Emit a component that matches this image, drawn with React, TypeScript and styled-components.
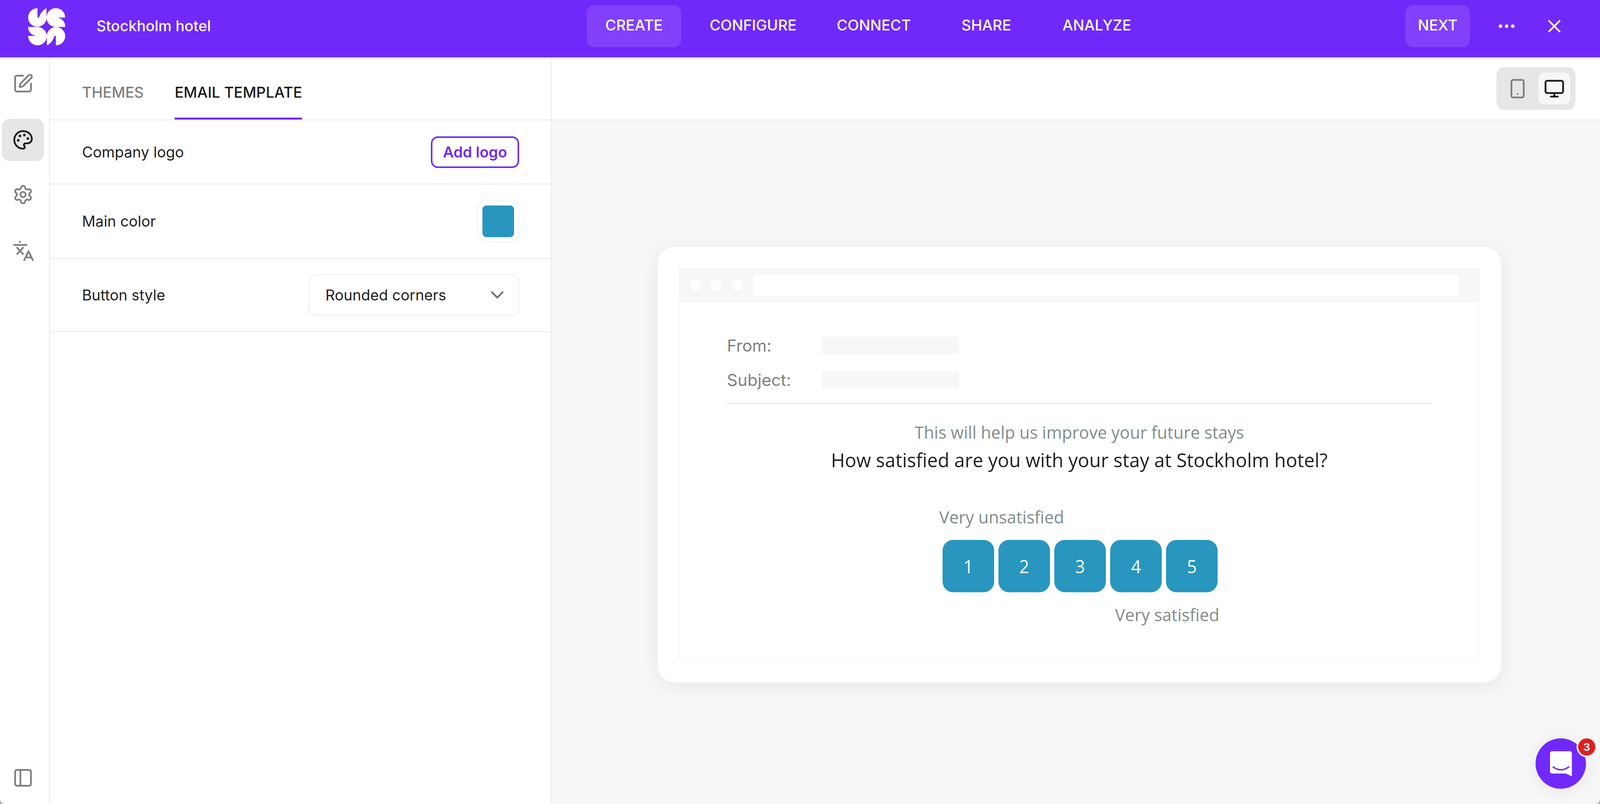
import React from 'react';
import styled, { createGlobalStyle } from 'styled-components';
import { ChevronDown, Ellipsis, Monitor, Palette, PanelLeft, Settings, Smartphone, SquarePen, X } from 'lucide-react';

const GlobalStyle = createGlobalStyle`
  html, body {
    margin: 0;
    padding: 0;
    background: #b8b8b8;
  }
  * {
    box-sizing: border-box;
  }
`;

const purple = '#7029f8';
const teal = '#2896be';
const line = '#e8e8e8';
const ui = "Inter, 'Liberation Sans', sans-serif";
const mail = "'Open Sans', 'Liberation Sans', sans-serif";

// fills the window: panels on the left are fixed, the preview takes what is left
const Page = styled.div`
  position: relative;
  width: 100%;
  height: 100vh;
  overflow: hidden;
  display: flex;
  flex-direction: column;
  font-family: ${ui};
  background: #fff;
  border-radius: 0 0 14px 14px;
`;

const Header = styled.header`
  flex: 0 0 147px;
  display: flex;
  align-items: flex-start;
  background: ${purple};
  color: #fff;
`;

const Brand = styled.div`
  flex: 0 0 1502px;
  height: 147px;
  display: flex;
  align-items: center;
  padding-left: 72px;
`;

const Logo = styled.svg`
  width: 95px;
  height: 95px;
  margin-top: -11px;
  margin-right: 80px;
`;

const ProjectName = styled.div`
  font-size: 38px;
  font-weight: 500;
  margin-top: -16px;
`;

const Nav = styled.nav`
  display: flex;
  margin-top: 13px;
`;

const NavItem = styled.div<{ $w: number; $active?: boolean }>`
  width: ${p => p.$w}px;
  height: 108px;
  border-radius: 20px;
  display: flex;
  align-items: center;
  justify-content: center;
  padding-bottom: 6px;
  font-size: 38px;
  font-weight: 500;
  background: ${p => (p.$active ? '#8240fb' : 'transparent')};
`;

const HeaderRight = styled.div`
  margin-left: auto;
  margin-top: 13px;
  display: flex;
  align-items: center;
  height: 108px;
`;

const NextButton = styled.div`
  width: 165px;
  height: 108px;
  border-radius: 20px;
  background: #8240fb;
  display: flex;
  align-items: center;
  justify-content: center;
  padding-bottom: 6px;
  font-size: 38px;
  font-weight: 500;
  margin-right: 67px;
`;

const HeaderIcon = styled.span<{ $gap: number }>`
  display: flex;
  margin-right: ${p => p.$gap}px;
`;

const Body = styled.div`
  flex: 1;
  display: flex;
  min-height: 0;
`;

const Rail = styled.aside`
  flex: 0 0 128px;
  display: flex;
  flex-direction: column;
  align-items: flex-start;
  padding: 13px 0 13px 5px;
  border-right: 2px solid ${line};
`;

const RailButton = styled.div<{ $active?: boolean; $mb?: number }>`
  width: 108px;
  height: 108px;
  flex: 0 0 108px;
  border-radius: 20px;
  margin-bottom: ${p => p.$mb ?? 0}px;
  display: flex;
  align-items: center;
  justify-content: center;
  color: ${p => (p.$active ? '#1a1a1a' : '#808080')};
  background: ${p => (p.$active ? '#e6e6e6' : 'transparent')};
`;

const RailSpacer = styled.div`
  flex: 1;
`;

const Panel = styled.section`
  flex: 0 0 1284px;
  display: flex;
  flex-direction: column;
  border-right: 2px solid ${line};
`;

const Tabs = styled.div`
  flex: 0 0 161px;
  display: flex;
  gap: 79px;
  padding-left: 82px;
  border-bottom: 2px solid ${line};
`;

const Tab = styled.div<{ $active?: boolean }>`
  display: flex;
  align-items: center;
  padding-top: 24px;
  height: 159px;
  font-size: 38px;
  font-weight: 500;
  color: ${p => (p.$active ? '#1a1a1a' : '#808080')};
  border-bottom: 5px solid ${p => (p.$active ? purple : 'transparent')};
`;

const Row = styled.div<{ $h: number }>`
  flex: 0 0 ${p => p.$h}px;
  display: flex;
  align-items: center;
  justify-content: space-between;
  padding: 0 81px 0 82px;
  border-bottom: 2px solid ${line};
  font-size: 38px;
  color: #1f1f1f;
`;

const AddLogo = styled.div`
  width: 226px;
  height: 81px;
  border: 4.5px solid ${purple};
  border-radius: 18px;
  color: ${purple};
  font-weight: 600;
  display: flex;
  align-items: center;
  justify-content: center;
`;

const Swatch = styled.div`
  width: 107px;
  height: 107px;
  border: 2px solid #f0f0f0;
  border-radius: 18px;
  display: flex;
  align-items: center;
  justify-content: center;
`;

const SwatchColor = styled.div`
  width: 81px;
  height: 81px;
  border-radius: 10px;
  background: ${teal};
`;

const Select = styled.div`
  width: 539px;
  height: 106px;
  border: 2px solid #ececec;
  border-radius: 20px;
  display: flex;
  align-items: center;
  justify-content: space-between;
  padding: 0 27px 0 41px;
`;

const Preview = styled.main`
  flex: 1;
  min-width: 0;
  display: flex;
  flex-direction: column;
  background: #f7f7f7;
`;

const PreviewBar = styled.div`
  flex: 0 0 161px;
  display: flex;
  align-items: flex-start;
  justify-content: flex-end;
  padding: 25px 63px 0 0;
  background: #fff;
  border-bottom: 2px solid ${line};
`;

const DeviceToggle = styled.div`
  width: 202px;
  height: 109px;
  border-radius: 20px;
  background: #e6e6e6;
  display: flex;
  align-items: center;
  padding-right: 13px;
`;

const DeviceOption = styled.div<{ $active?: boolean }>`
  width: ${p => (p.$active ? 82 : 107)}px;
  height: 81px;
  border-radius: 16px;
  display: flex;
  align-items: center;
  justify-content: center;
  color: ${p => (p.$active ? '#1a1a1a' : '#808080')};
  background: ${p => (p.$active ? '#f7f7f7' : 'transparent')};
`;

const Stage = styled.div`
  flex: 1;
  display: flex;
  justify-content: center;
  align-items: flex-start;
  padding: 324px 0 0 18px;
`;

const Card = styled.div`
  flex: 0 0 2160px;
  height: 1115px;
  background: #fff;
  border-radius: 44px;
  padding: 54px;
  box-shadow: 0 8px 50px rgba(0, 0, 0, 0.07);
`;

const Frame = styled.div`
  height: 1006px;
  border: 2px solid #f8f8f8;
  border-top: 0;
  font-family: ${mail};
`;

const BrowserBar = styled.div`
  height: 88px;
  background: #f7f7f7;
  display: flex;
  align-items: center;
  gap: 26px;
  padding: 0 54px 0 27px;
`;

const BrowserDot = styled.div`
  flex: 0 0 28px;
  height: 28px;
  border-radius: 50%;
  background: #fff;
`;

const AddressBar = styled.div`
  flex: 1;
  height: 53px;
  background: #fff;
`;

const MailBody = styled.div`
  padding: 88px 122px 0;
`;

const MetaRow = styled.div`
  display: flex;
  align-items: center;
  height: 45px;
  margin-bottom: 43px;
  font-family: ${ui};
  font-size: 42.5px;
  color: #808080;
`;

const MetaLabel = styled.div`
  width: 243px;
`;

const MetaValue = styled.div`
  width: 350px;
  height: 45px;
  background: #f7f7f7;
`;

const Divider = styled.div`
  height: 2px;
  margin-top: -6px;
  background: #e6e6e6;
`;

const Hint = styled.div`
  margin-top: 43px;
  text-align: center;
  font-size: 43px;
  line-height: 60px;
  color: #7f8c8d;
`;

const Question = styled.div`
  margin-top: 5px;
  text-align: center;
  font-size: 48.5px;
  line-height: 70px;
  color: #1f1f1f;
`;

const Scale = styled.div`
  width: 717px;
  margin: 82px auto 0;
`;

const ScaleLabel = styled.div<{ $right?: boolean }>`
  font-size: 43px;
  line-height: 60px;
  color: #7f8c8d;
  text-align: ${p => (p.$right ? 'right' : 'left')};
`;

const ScaleButtons = styled.div`
  display: flex;
  gap: 10.6px;
  margin: 28px 0 28px 8px;
`;

const ScaleButton = styled.div`
  width: 132.5px;
  height: 134px;
  border-radius: 27px;
  background: ${teal};
  color: #fff;
  font-size: 45px;
  display: flex;
  align-items: center;
  justify-content: center;
`;

const ChatBubble = styled.div`
  position: absolute;
  right: 36px;
  bottom: 39px;
  width: 129px;
  height: 129px;
  border-radius: 50%;
  background: ${purple};
  display: flex;
  align-items: center;
  justify-content: center;
  box-shadow: 0 4px 40px rgba(0, 0, 0, 0.08);
`;

const ChatBadge = styled.div`
  position: absolute;
  left: 105px;
  top: -4px;
  width: 52px;
  height: 52px;
  border-radius: 50%;
  border: 4px solid #f4f4f4;
  background: #e01e1e;
  color: #fff;
  font-size: 27px;
  font-weight: 700;
  display: flex;
  align-items: center;
  justify-content: center;
`;

const navItems = [
  { label: 'CREATE', w: 242, active: true },
  { label: 'CONFIGURE', w: 368 },
  { label: 'CONNECT', w: 250 },
  { label: 'SHARE', w: 326 },
  { label: 'ANALYZE', w: 240 },
];

const BrandMark = () => (
  <Logo viewBox="0 0 95 95" fill="#fff">
    <path d="M24 0V24L47 24A23.5 23.5 0 0 1 0 24A24 24 0 0 1 24 0Z" />
    <path d="M47 0V24A23 23 0 0 1 24 47C24 30 30 8 47 0Z" />
    <path d="M95 24H47A24 24 0 0 1 95 24Z" />
    <path d="M47 24H72C85 24 95 34 95 48H71A24 24 0 0 1 47 24Z" />
    <path d="M0 48H24A24 24 0 0 1 48 71H24C10 71 0 61 0 48Z" />
    <path d="M0 71H48A24 24 0 0 1 0 71Z" />
    <path d="M71 48A24 24 0 0 1 95 71A24 24 0 0 1 71 95V71H48A24 24 0 0 1 71 48Z" />
    <path d="M48 95V71A24 24 0 0 1 71 48C71 65 65 88 48 95Z" />
  </Logo>
);

// language icon: bar with dot, x, and a small A
const TranslateIcon = () => (
  <svg width="54" height="54" viewBox="0 0 54 54" fill="none" stroke="currentColor" strokeWidth="4.5" strokeLinecap="round" strokeLinejoin="round">
    <circle cx="19" cy="5" r="2.6" fill="currentColor" stroke="none" />
    <path d="M4 13H36" />
    <path d="M12 20L27 36M27 20L12 36" />
    <path d="M30 52L41 29L52 52M34 45H48" />
  </svg>
);

const ChatIcon = () => (
  <svg width="58" height="66" viewBox="0 0 58 66">
    <path d="M6 1H52A5 5 0 0 1 57 6V65L41 58H6A5 5 0 0 1 1 53V6A5 5 0 0 1 6 1Z" fill="#fff" />
    <path d="M9 41Q29 56 49 41" fill="none" stroke={purple} strokeWidth="3.5" strokeLinecap="round" />
  </svg>
);

export default function App() {
  return (
    <Page>
      <GlobalStyle />
      <Header>
        <Brand>
          <BrandMark />
          <ProjectName>Stockholm hotel</ProjectName>
        </Brand>
        <Nav>
          {navItems.map(item => (
            <NavItem key={item.label} $w={item.w} $active={item.active}>
              {item.label}
            </NavItem>
          ))}
        </Nav>
        <HeaderRight>
          <NextButton>NEXT</NextButton>
          <HeaderIcon $gap={68}>
            <Ellipsis size={54} strokeWidth={2} />
          </HeaderIcon>
          <HeaderIcon $gap={90}>
            <X size={54} strokeWidth={2} />
          </HeaderIcon>
        </HeaderRight>
      </Header>
      <Body>
        <Rail>
          <RailButton $mb={36}><SquarePen size={54} strokeWidth={2} /></RailButton>
          <RailButton $active $mb={32}><Palette size={54} strokeWidth={2} /></RailButton>
          <RailButton $mb={35}><Settings size={54} strokeWidth={2} /></RailButton>
          <RailButton><TranslateIcon /></RailButton>
          <RailSpacer />
          <RailButton><PanelLeft size={54} strokeWidth={2} /></RailButton>
        </Rail>
        <Panel>
          <Tabs>
            <Tab>THEMES</Tab>
            <Tab $active>EMAIL TEMPLATE</Tab>
          </Tabs>
          <Row $h={164}>
            Company logo
            <AddLogo>Add logo</AddLogo>
          </Row>
          <Row $h={190}>
            Main color
            <Swatch><SwatchColor /></Swatch>
          </Row>
          <Row $h={188}>
            Button style
            <Select>
              Rounded corners
              <ChevronDown size={54} strokeWidth={2} color="#6e6e6e" />
            </Select>
          </Row>
        </Panel>
        <Preview>
          <PreviewBar>
            <DeviceToggle>
              <DeviceOption><Smartphone size={54} strokeWidth={2} /></DeviceOption>
              <DeviceOption $active><Monitor size={54} strokeWidth={2} /></DeviceOption>
            </DeviceToggle>
          </PreviewBar>
          <Stage>
            <Card>
              <Frame>
                <BrowserBar>
                  <BrowserDot />
                  <BrowserDot />
                  <BrowserDot />
                  <AddressBar />
                </BrowserBar>
                <MailBody>
                  <MetaRow><MetaLabel>From:</MetaLabel><MetaValue /></MetaRow>
                  <MetaRow><MetaLabel>Subject:</MetaLabel><MetaValue /></MetaRow>
                  <Divider />
                  <Hint>This will help us improve your future stays</Hint>
                  <Question>How satisfied are you with your stay at Stockholm hotel?</Question>
                  <Scale>
                    <ScaleLabel>Very unsatisfied</ScaleLabel>
                    <ScaleButtons>
                      {[1, 2, 3, 4, 5].map(n => <ScaleButton key={n}>{n}</ScaleButton>)}
                    </ScaleButtons>
                    <ScaleLabel $right>Very satisfied</ScaleLabel>
                  </Scale>
                </MailBody>
              </Frame>
            </Card>
          </Stage>
        </Preview>
      </Body>
      <ChatBubble>
        <ChatIcon />
        <ChatBadge>3</ChatBadge>
      </ChatBubble>
    </Page>
  );
}
